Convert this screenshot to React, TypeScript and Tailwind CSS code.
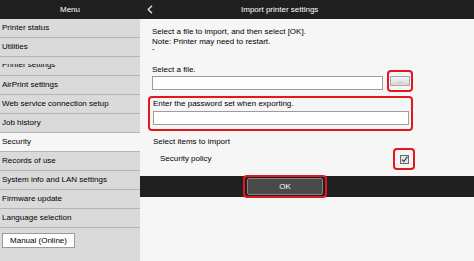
const menuItems = [
  "Printer status",
  "Utilities",
  "Printer settings",
  "AirPrint settings",
  "Web service connection setup",
  "Job history",
  "Security",
  "Records of use",
  "System info and LAN settings",
  "Firmware update",
  "Language selection",
];

const Sidebar = () => {
  return (
    <div className="flex flex-col w-[140px] shrink-0 bg-[#dadada]">
      <div className="flex items-center justify-center h-[19px] bg-[#202020] text-white">Menu</div>
      {menuItems.map((item) =>
        item === "Printer settings" ? (
          <div key={item} className="h-[19px] border-b border-[#b4b4b4] pl-[2px]">
            {/* row is half covered in the capture, only the lower part of the text shows */}
            <div className="flex items-end h-[5px] mt-[7px] overflow-hidden">
              <span className="leading-[8px]">{item}</span>
            </div>
          </div>
        ) : (
          <div
            key={item}
            className={`flex items-center h-[19px] border-b border-[#b4b4b4] pl-[2px] ${
              item === "Security" ? "bg-[#f6f6f6]" : ""
            }`}
          >
            {item}
          </div>
        )
      )}
      <div className="flex items-center justify-center w-[73px] h-[15px] mt-[5px] ml-[2px] bg-white border border-[#9a9a9a]">
        Manual (Online)
      </div>
    </div>
  );
};

const CheckBox = () => (
  <svg width="9" height="9" viewBox="0 0 9 9">
    <rect x="0.5" y="0.5" width="8" height="8" fill="#e4e4e4" stroke="#6b6b6b" />
    <path d="M2 4.6 L3.8 6.6 L7.4 1.6" fill="none" stroke="#444" strokeWidth="1.2" />
  </svg>
);

const ImportSettings = () => {
  return (
    <div className="flex flex-col flex-1 bg-[#f6f6f6]">
      <div className="flex items-center h-[19px] bg-[#202020] text-white">
        <svg width="6" height="9" viewBox="0 0 6 9" className="ml-[7px]">
          <path d="M5 0.8 L1.2 4.5 L5 8.2" fill="none" stroke="#e8e8e8" strokeWidth="1.3" />
        </svg>
        <span className="ml-[88px]">Import printer settings</span>
      </div>

      <div className="flex flex-col pl-[12px]">
        <div className="mt-[8px] leading-[10px]">Select a file to import, and then select [OK].</div>
        <div className="leading-[10px]">Note: Printer may need to restart.</div>
        <div className="-mt-[2px] leading-[7px]">-</div>

        <div className="mt-[13px] leading-[10px]">Select a file.</div>
        <div className="flex items-start mt-[1px]">
          <div className="w-[231px] h-[14px] bg-white border border-[#9c9c9c]" />
          <div className="flex items-center justify-center w-[26px] h-[22px] -mt-[6px] ml-[4px] border-2 border-[#e5161d] rounded-[4px]">
            <div className="flex items-center justify-center w-[20px] h-[10px] bg-gradient-to-b from-[#f4f4f4] to-[#d6d6d6] border border-[#a8a8a8] text-[6px] leading-none text-[#666]">
              ...
            </div>
          </div>
        </div>

        <div className="flex flex-col w-[265px] mt-[4px] -ml-[4px] pl-[3px] pb-[4px] border-2 border-[#e5161d] rounded-[4px]">
          <div className="leading-[10px] mt-[1px]">Enter the password set when exporting.</div>
          <div className="w-[256px] h-[14px] mt-[2px] bg-white border border-[#9c9c9c]" />
        </div>

        <div className="mt-[6px] ml-[1px] leading-[10px]">Select items to import</div>
        <div className="flex items-center h-[22px] mt-[1px]">
          <span className="ml-[8px] w-[233px]">Security policy</span>
          <div className="flex items-center justify-center w-[22px] h-[22px] border-2 border-[#e5161d] rounded-[4px]">
            <CheckBox />
          </div>
        </div>
      </div>

      <div className="flex items-center h-[21px] mt-[6px] pl-[103px] bg-[#202020]">
        <div className="flex items-center justify-center w-[84px] h-[23px] border-2 border-[#e5161d] rounded-[4px]">
          <div className="flex items-center justify-center w-[76px] h-[17px] bg-[#4a4a4a] border border-[#858585] rounded-[2px] text-white">
            OK
          </div>
        </div>
      </div>
    </div>
  );
};

const App = () => {
  return (
    <div className="flex w-[474px] h-[261px] overflow-hidden text-[8px] text-black font-['Liberation_Sans',Arial,sans-serif]">
      <Sidebar />
      <ImportSettings />
    </div>
  );
};

export default App;
